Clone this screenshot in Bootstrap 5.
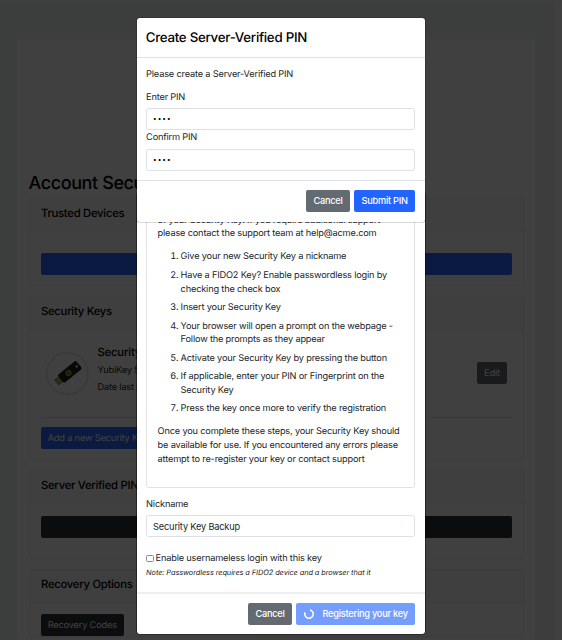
<!DOCTYPE html>
<html lang="en">
<head>
<meta charset="utf-8">
<meta name="viewport" content="width=device-width, initial-scale=1">
<title>Account Security</title>
<link href="https://cdn.jsdelivr.net/npm/bootstrap@5.3.0/dist/css/bootstrap.min.css" rel="stylesheet">
<style>
html{font-size:9.22px}
body{font-family:Inter,"Liberation Sans",sans-serif;background:#ecf8f0;color:#212529;font-size:9.22px;line-height:13.83px;letter-spacing:-.18px;height:640px;overflow:hidden;position:relative;text-rendering:geometricPrecision}
.topline{height:2px;background:#fafcff}
.gutter{width:8px;background:#fff;flex:none}
.page-area{height:638px;padding:37px 19px 0 17px}
.sheet{background:#fff;height:601px;border-radius:2px;padding:134px 11.5px 0 11.5px}
.sheet h2{font-size:18px;line-height:22px;font-weight:500;color:#000;margin:0 0 3px;letter-spacing:-.4px}
.panel{border:1px solid #f0f0f0;border-radius:2px;margin-bottom:9.5px}
.panel>.card-header{height:33px;padding:0 11.5px;background:#fafafa;border-bottom:1px solid #ededed;font-size:11.3px;line-height:28px;font-weight:500;color:#000;border-radius:0;letter-spacing:-.28px}
.panel>.card-body{padding:0 11px}
.btn{font-size:9.22px;line-height:13.83px;padding:4px 7.2px;border:0;height:22px;border-radius:2px;font-weight:500;letter-spacing:-.25px;white-space:nowrap}
.sheet .btn{font-weight:400;letter-spacing:-.18px;padding-top:4.8px}
.btn-primary,.btn-primary:disabled{background:#2264ff}
.btn-primary:disabled{background:#759dfd;opacity:1}
.btn-secondary{background:#636a72}
.h88{height:88.3px}.h164{height:164.5px}.h89{height:89.5px}
.dim-blue{background:#2b68ff;color:#fff}
.dim-dark{background:#2b3035;color:#fff}
.keyring{width:43px;height:43px;flex:none}
.keytext{line-height:17px;padding-bottom:7.4px}
.keytext strong{font-size:11.3px;font-weight:500;color:#000;letter-spacing:-.2px}
.shade{position:absolute;inset:0;background:rgba(0,0,0,.75)}
.dlg{position:absolute;left:136.5px;width:288px;background:#fff;border-radius:3px;box-shadow:0 0 0 .6px rgba(0,0,0,.7)}
.dlg-front{top:17.5px;height:204px;box-shadow:0 0 0 .6px rgba(0,0,0,.3)}
.dlg-back{top:192.2px;height:441.8px}
.dlg .modal-header{height:40px;padding:3px 9.2px 0;border-bottom:1px solid #dee2e6}
.dlg .modal-title{font-size:13.3px;font-weight:500;color:#000;letter-spacing:-.27px}
.dlg .modal-body{padding:9.2px 9.6px}
.dlg-front .modal-body{padding:10px 9.6px 9.2px}
.dlg p{margin-bottom:9.2px}
.dlg label{display:block}
.dlg .form-control{height:22px;padding:0 6px;font-size:9.22px;line-height:20px;letter-spacing:-.18px;border:1px solid #dde1e6;border-radius:2.5px;min-height:0}
.dlg .form-control[type=password]{font-size:6.4px;letter-spacing:1px;color:#000}
.dlg .modal-footer{padding:0 9.6px;border-top:1px solid #dee2e6;height:41px;gap:4.6px}
.dlg .modal-footer>*{margin:0}
.dlg-back .modal-footer{border-top:2px solid #efefef;height:42px}
.steps{border:1px solid #e2e2e2;border-radius:2.5px;padding:11.2px 10.5px 10.5px;white-space:nowrap}
.steps ol{padding-left:23px;margin-bottom:9.2px}
.steps li{margin-bottom:4.6px}
.steps li:last-child{margin-bottom:0}
.tick{appearance:none;width:7.5px;height:7.5px;border:1px solid #8b8b8b;border-radius:1.5px;background:#fff;margin:0 2px 1.5px 0}
.note{font-size:7.4px;line-height:11px;font-style:italic;letter-spacing:-.09px}
</style>
</head>
<body>
<div class="topline"></div>
<div class="d-flex">
  <main class="page-area flex-grow-1">
    <div class="sheet">
      <h2>Account Security</h2>
      <section class="card panel h88">
        <div class="card-header">Trusted Devices</div>
        <div class="card-body"><div class="btn dim-blue d-block" style="margin-top:21.3px"></div></div>
      </section>
      <section class="card panel h164">
        <div class="card-header">Security Keys</div>
        <div class="card-body">
          <div class="d-flex align-items-center border-bottom" style="height:88px">
            <svg class="keyring" style="margin:0 9px 0 5px" viewBox="0 0 43 43">
              <circle cx="21.5" cy="21.5" r="20.7" fill="none" stroke="#dcdcdc" stroke-width="1.3"/>
              <g transform="translate(22.5 21) rotate(-39)">
                <rect x="-15" y="-3" width="6" height="6" fill="#c7a765" stroke="#55482f" stroke-width=".7"/>
                <rect x="-10" y="-5.2" width="23.5" height="10.4" rx="1.6" fill="#222"/>
                <circle cx="0" cy="0" r="3" fill="#b59248"/><circle cx="0" cy="0" r="1.2" fill="#544520"/>
                <circle cx="10.5" cy="0" r="1.3" fill="#ddd"/>
              </g>
            </svg>
            <div class="keytext flex-grow-1"><strong>Security Key</strong><br>YubiKey 5 NFC<br>Date last used</div>
            <span class="btn btn-secondary" style="margin-right:4.5px">Edit</span>
          </div>
          <span class="btn dim-blue d-inline-block" style="margin-top:9.5px">Add a new Security Key</span>
        </div>
      </section>
      <section class="card panel h89">
        <div class="card-header">Server Verified PIN</div>
        <div class="card-body"><div class="btn dim-dark d-block" style="margin-top:12px"></div></div>
      </section>
      <section class="card panel mb-0">
        <div class="card-header">Recovery Options</div>
        <div class="card-body"><span class="btn dim-dark d-inline-block" style="margin-top:11px">Recovery Codes</span></div>
      </section>
    </div>
  </main>
  <div class="gutter"></div>
</div>
<div class="shade"></div>

<div class="dlg dlg-back d-flex flex-column">
  <div class="modal-body">
    <div class="steps">
      <p>of your Security Key. If you require additional support<br>please contact the support team at help@acme.com</p>
      <ol>
        <li>Give your new Security Key a nickname</li>
        <li>Have a FIDO2 Key? Enable passwordless login by<br>checking the check box</li>
        <li>Insert your Security Key</li>
        <li>Your browser will open a prompt on the webpage -<br>Follow the prompts as they appear</li>
        <li>Activate your Security Key by pressing the button</li>
        <li>If applicable, enter your PIN or Fingerprint on the<br>Security Key</li>
        <li>Press the key once more to verify the registration</li>
      </ol>
      <p>Once you complete these steps, your Security Key should<br>be available for use. If you encountered any errors please<br>attempt to re-register your key or contact support</p>
    </div>
    <label style="margin:10.3px 0 3.7px">Nickname</label>
    <input class="form-control" value="Security Key Backup">
    <div class="d-flex align-items-center" style="margin-top:14.7px"><input class="tick" type="checkbox"><span>Enable usernameless login with this key</span></div>
    <div class="note" style="margin-top:1.5px">Note: Passwordless requires a FIDO2 device and a browser that it</div>
  </div>
  <div class="modal-footer d-flex align-items-center justify-content-end flex-nowrap">
    <button class="btn btn-secondary">Cancel</button>
    <button class="btn btn-primary d-flex align-items-center" disabled><svg width="10" height="10" viewBox="0 0 10 10" style="margin-right:9px"><path d="M1.1 3.4A4.2 4.2 0 1 0 6 .9" fill="none" stroke="#fff" stroke-width="1.5"/></svg>Registering your key</button>
  </div>
</div>

<div class="dlg dlg-front">
  <div class="modal-header d-flex align-items-center"><h4 class="modal-title">Create Server-Verified PIN</h4></div>
  <div class="modal-body">
    <p>Please create a Server-Verified PIN</p>
    <label style="margin-bottom:4px">Enter PIN</label>
    <input class="form-control" type="password" value="1234">
    <label style="margin:.9px 0 3.6px">Confirm PIN</label>
    <input class="form-control" type="password" value="1234">
  </div>
  <div class="modal-footer d-flex align-items-center justify-content-end flex-nowrap">
    <button class="btn btn-secondary">Cancel</button>
    <button class="btn btn-primary">Submit PIN</button>
  </div>
</div>
<script src="https://cdn.jsdelivr.net/npm/bootstrap@5.3.0/dist/js/bootstrap.bundle.min.js"></script>
</body>
</html>
